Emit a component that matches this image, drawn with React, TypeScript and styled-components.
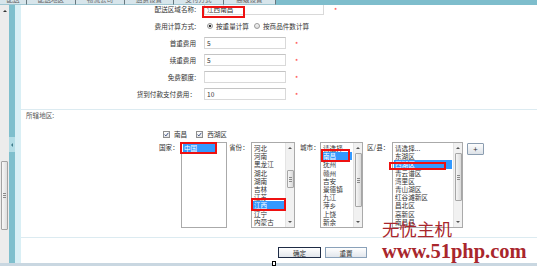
import React from "react";
import styled, { createGlobalStyle } from "styled-components";

const Global = createGlobalStyle`
  html, body { margin: 0; padding: 0; background: #fff; }
  body { font-family: "Noto Sans CJK SC", "Noto Sans", sans-serif; }
  * { box-sizing: border-box; }
`;

const Page = styled.div`
  position: relative;
  width: 537px;
  height: 266px;
  overflow: hidden;
  display: flex;
  flex-direction: column;
  background: #fff;
  font-size: 6.6px;
  color: #333;
`;

const TabBar = styled.div`
  flex: none;
  height: 5px;
  display: flex;
  background: #7ebdcc;
  overflow: hidden;
`;

const Tab = styled.div<{ $w: number }>`
  width: ${(p) => p.$w}px;
  height: 5px;
  background: #d7e5eb;
  border-right: 1px solid #66777e;
  border-bottom: 1px solid #9fc6d1;
  display: flex;
  justify-content: center;
  overflow: hidden;
`;

const TabText = styled.span`
  line-height: 8px;
  margin-top: -5px;
  color: #666;
  white-space: nowrap;
`;

const Body = styled.div`
  flex: 1;
  min-height: 0;
  display: flex;
`;

const SideScroll = styled.div`
  width: 9px;
  flex: none;
  background: #ececec;
  display: flex;
  flex-direction: column;
  padding-top: 5px;
`;

const UpTri = styled.div`
  align-self: center;
  width: 0;
  height: 0;
  border-left: 2px solid transparent;
  border-right: 2px solid transparent;
  border-bottom: 2px solid #333;
`;

const SideThumb = styled.div`
  margin-top: 149px;
  margin-left: 1px;
  width: 7px;
  height: 69px;
  border: 1px solid #a2a2a2;
  border-radius: 1px;
  background: linear-gradient(to right, #f7f7f7, #dedede);
  display: flex;
  align-items: center;
  justify-content: center;
`;

const Grip = styled.div<{ $w?: number }>`
  width: ${(p) => p.$w ?? 3}px;
  height: 5px;
  background: repeating-linear-gradient(#8a8a8a 0 1px, transparent 1px 2px);
`;

const TealStrip = styled.div`
  width: 6px;
  flex: none;
  background: #7fbfcd;
  display: flex;
  flex-direction: column;
`;

const Collapse = styled.div`
  margin-top: 132px;
  height: 15px;
  background: #b3dde6;
  display: flex;
  align-items: center;
  justify-content: center;
`;

const LeftTri = styled.div`
  width: 0;
  height: 0;
  border-top: 2px solid transparent;
  border-bottom: 2px solid transparent;
  border-right: 2px solid #3f7b8a;
`;

const LightStrip = styled.div`
  width: 6px;
  flex: none;
  background: #d9eff5;
`;

const Content = styled.div`
  position: relative;
  flex: 1;
  min-width: 0;
  display: flex;
  flex-direction: column;
  overflow: hidden;
  background: #fff;
`;

const Form = styled.div`
  margin-top: -4.5px;
  display: flex;
  flex-direction: column;
`;

const Row = styled.div`
  height: 17px;
  display: flex;
  align-items: center;
`;

const Label = styled.div`
  width: 175px;
  margin-right: 8px;
  text-align: right;
  white-space: nowrap;
  color: #333;
`;

const Field = styled.div<{ $w: number }>`
  position: relative;
  width: ${(p) => p.$w}px;
  height: 12px;
  border: 1px solid #d9d9d9;
  border-top-color: #c4c4c4;
  padding: 0 2px;
  line-height: 10px;
  color: #333;
  white-space: nowrap;
`;

const Req = styled.span<{ $gap: number }>`
  margin-left: ${(p) => p.$gap}px;
  color: #f33;
  font-size: 7px;
  line-height: 7px;
  padding-top: 3px;
`;

const Radio = styled.span<{ $on?: boolean; $ml: number }>`
  width: 6px;
  height: 6px;
  margin-left: ${(p) => p.$ml}px;
  margin-right: 3px;
  border-radius: 50%;
  border: 1px solid #9a9a9a;
  background: ${(p) =>
    p.$on
      ? "radial-gradient(circle, #2b2b2b 0 1.3px, #f2f2f2 1.6px)"
      : "linear-gradient(#f7f7f7, #dcdcdc)"};
`;

const Text = styled.span`
  white-space: nowrap;
`;

const Divider = styled.div<{ $mt: number }>`
  height: 1px;
  margin-top: ${(p) => p.$mt}px;
  background: #dcebf1;
  flex: none;
`;

const Legend = styled.div`
  margin-top: 1px;
  height: 8px;
  line-height: 8px;
  padding-left: 5px;
  color: #555;
`;

const CheckRow = styled.div`
  margin-top: 11px;
  height: 8px;
  padding-left: 142px;
  display: flex;
  align-items: center;
`;

const CheckBox = styled.span<{ $ml: number }>`
  width: 7px;
  height: 7px;
  margin-left: ${(p) => p.$ml}px;
  margin-right: 4px;
  border: 1px solid #8e8e8e;
  background: linear-gradient(#ffffff, #e3e3e3);
  display: flex;
  align-items: center;
  justify-content: center;
`;

const ListsRow = styled.div`
  margin-top: 4px;
  padding-left: 138px;
  display: flex;
  align-items: flex-start;
`;

const ListLabel = styled.div<{ $w: number; $pl: number }>`
  width: ${(p) => p.$w}px;
  padding-left: ${(p) => p.$pl}px;
  padding-top: 1px;
  line-height: 8px;
  white-space: nowrap;
  color: #333;
`;

const ListBox = styled.div<{ $w: number }>`
  position: relative;
  flex: none;
  width: ${(p) => p.$w}px;
  height: 86px;
  border: 1px solid #aaaaaa;
  background: #fff;
  display: flex;
`;

const Items = styled.div<{ $pr: number }>`
  flex: 1;
  min-width: 0;
  overflow: hidden;
  padding: 1px ${(p) => p.$pr}px 0 1px;
`;

const Item = styled.div<{ $sel?: boolean }>`
  height: 8.2px;
  line-height: 8.2px;
  padding-left: 1px;
  white-space: nowrap;
  overflow: hidden;
  background: ${(p) => (p.$sel ? "#3399ff" : "transparent")};
  color: ${(p) => (p.$sel ? "#fff" : "#333")};
`;

const Track = styled.div`
  width: 9px;
  flex: none;
  background: #f1f1f1;
  border-left: 1px solid #e4e4e4;
  display: flex;
  flex-direction: column;
  align-items: center;
`;

const ArrowCell = styled.div`
  height: 10px;
  flex: none;
  display: flex;
  align-items: center;
  justify-content: center;
`;

const Tri = styled.div<{ $down?: boolean }>`
  width: 0;
  height: 0;
  border-left: 2px solid transparent;
  border-right: 2px solid transparent;
  ${(p) => (p.$down ? "border-top: 2px solid #555;" : "border-bottom: 2px solid #555;")}
`;

const Thumb = styled.div<{ $mt: number; $h: number }>`
  margin-top: ${(p) => p.$mt}px;
  width: 7px;
  height: ${(p) => p.$h}px;
  border: 1px solid #a6a6a6;
  border-radius: 1px;
  background: linear-gradient(to right, #f6f6f6, #d9d9d9);
  display: flex;
  align-items: center;
  justify-content: center;
`;

const Spacer = styled.div`
  flex: 1;
`;

const Marker = styled.div`
  position: absolute;
  border: 2px solid #ee1111;
  pointer-events: none;
`;

const PlusButton = styled.div`
  margin-left: 4px;
  margin-top: 1px;
  width: 17px;
  height: 12px;
  border: 1px solid #8b9db0;
  border-radius: 1px;
  background: linear-gradient(#fdfdfd, #dde2e8);
  display: flex;
  align-items: center;
  justify-content: center;
  font-size: 8px;
  line-height: 8px;
  color: #333;
`;

const ButtonRow = styled.div`
  margin-top: 9px;
  padding-left: 257px;
  display: flex;
  gap: 4px;
`;

const Button = styled.div<{ $w: number; $focus?: boolean }>`
  width: ${(p) => p.$w}px;
  height: 11px;
  border: ${(p) => (p.$focus ? "1.5px solid #1e2b45" : "1px solid #8aa1b9")};
  background: linear-gradient(#ffffff, #e2e6ec);
  display: flex;
  align-items: center;
  justify-content: center;
  line-height: 8px;
  color: #333;
`;

const BottomBar = styled.div`
  flex: none;
  height: 3px;
  background: #c9d7e1;
`;

const WaterCn = styled.div`
  position: absolute;
  left: 382px;
  top: 218px;
  font-family: "Noto Sans CJK SC", sans-serif;
  font-size: 17.5px;
  line-height: 22px;
  color: #a9262c;
  white-space: nowrap;
`;

const WaterEn = styled.div`
  position: absolute;
  left: 382px;
  top: 240px;
  font-family: "Liberation Serif", serif;
  font-weight: 700;
  font-size: 20.5px;
  line-height: 22px;
  color: #a9262c;
  white-space: nowrap;
`;

const Cursor = styled.div`
  position: absolute;
  left: 272px;
  top: 261px;
  width: 4px;
  height: 5px;
  border: 1px solid #000;
  background: #fff;
`;

type Rect = { left: number; top: number; width: number; height: number };

function SelectList(props: {
  w: number;
  items: string[];
  sel: number;
  marker: Rect;
  scroll?: { mt: number; h: number };
  pr?: number;
}) {
  const { w, items, sel, marker, scroll, pr = 1 } = props;
  return (
    <ListBox $w={w}>
      <Items $pr={pr}>
        {items.map((t, i) => (
          <Item key={i} $sel={i === sel}>
            {t}
          </Item>
        ))}
      </Items>
      {scroll && (
        <Track>
          <ArrowCell>
            <Tri />
          </ArrowCell>
          <Thumb $mt={scroll.mt} $h={scroll.h}>
            <Grip />
          </Thumb>
          <Spacer />
          <ArrowCell>
            <Tri $down />
          </ArrowCell>
        </Track>
      )}
      <Marker style={marker} />
    </ListBox>
  );
}

const Check = () => (
  <svg width="5" height="5" viewBox="0 0 5 5">
    <path d="M0.6 2.6 L1.9 3.9 L4.4 0.8" fill="none" stroke="#27407a" strokeWidth="0.9" />
  </svg>
);

const tabs = [
  { w: 27, t: "配送" },
  { w: 49, t: "配送地区" },
  { w: 49, t: "物流公司" },
  { w: 49, t: "运费设置" },
  { w: 50, t: "支付方式" },
  { w: 52, t: "高级设置" },
];

const provinces = ["河北", "河南", "黑龙江", "湖北", "湖南", "吉林", "江苏", "江西", "辽宁", "内蒙古", "宁夏", "青海"];
const cities = ["请选择...", "南昌", "抚州", "赣州", "吉安", "景德镇", "九江", "萍乡", "上饶", "新余", "宜春", "鹰潭"];
const districts = ["请选择...", "东湖区", "西湖区", "青云谱区", "湾里区", "青山湖区", "红谷滩新区", "昌北区", "高新区", "南昌县", "新建县"];

export default function App() {
  return (
    <Page>
      <Global />
      <TabBar>
        {tabs.map((t, i) => (
          <Tab key={i} $w={t.w}>
            <TabText>{t.t}</TabText>
          </Tab>
        ))}
      </TabBar>
      <Body>
        <SideScroll>
          <UpTri />
          <SideThumb>
            <Grip />
          </SideThumb>
        </SideScroll>
        <TealStrip>
          <Collapse>
            <LeftTri />
          </Collapse>
        </TealStrip>
        <LightStrip />
        <Content>
          <Form>
            <Row>
              <Label>配送区域名称:</Label>
              <Field $w={120}>
                江西南昌
                <Marker style={{ left: -3, top: 2, width: 43, height: 12 }} />
              </Field>
              <Req $gap={10}>*</Req>
            </Row>
            <Row>
              <Label>费用计算方式:</Label>
              <Radio $on $ml={3} />
              <Text>按重量计算</Text>
              <Radio $ml={5} />
              <Text>按商品件数计算</Text>
            </Row>
            <Row>
              <Label>首重费用</Label>
              <Field $w={82}>5</Field>
              <Req $gap={9}>*</Req>
            </Row>
            <Row>
              <Label>续重费用</Label>
              <Field $w={82}>5</Field>
              <Req $gap={9}>*</Req>
            </Row>
            <Row>
              <Label>免费额度:</Label>
              <Field $w={82} />
              <Req $gap={9}>*</Req>
            </Row>
            <Row>
              <Label>货到付款支付费用：</Label>
              <Field $w={82}>10</Field>
              <Req $gap={9}>*</Req>
            </Row>
          </Form>
          <Divider $mt={6.5} />
          <Legend>所辖地区:</Legend>
          <CheckRow>
            <CheckBox $ml={0}>
              <Check />
            </CheckBox>
            <Text>南昌</Text>
            <CheckBox $ml={9}>
              <Check />
            </CheckBox>
            <Text>西湖区</Text>
          </CheckRow>
          <ListsRow>
            <ListLabel $w={22} $pl={0}>国家：</ListLabel>
            <SelectList
              w={46}
              items={["中国"]}
              sel={0}
              pr={11}
              marker={{ left: -2, top: -1, width: 37, height: 12 }}
            />
            <ListLabel $w={24} $pl={2}>省份：</ListLabel>
            <SelectList
              w={44}
              items={provinces}
              sel={7}
              scroll={{ mt: 17, h: 18 }}
              marker={{ left: -1, top: 55, width: 35, height: 13 }}
            />
            <ListLabel $w={25} $pl={5}>城市：</ListLabel>
            <SelectList
              w={43}
              items={cities}
              sel={1}
              scroll={{ mt: 0, h: 54 }}
              marker={{ left: 0, top: 6, width: 29, height: 13 }}
            />
            <ListLabel $w={29} $pl={4}>区/县：</ListLabel>
            <SelectList
              w={71}
              items={districts}
              sel={2}
              scroll={{ mt: 0, h: 48 }}
              marker={{ left: -4, top: 19, width: 57, height: 8 }}
            />
            <PlusButton>+</PlusButton>
          </ListsRow>
          <Divider $mt={9} />
          <ButtonRow>
            <Button $w={43} $focus>
              确定
            </Button>
            <Button $w={42}>重置</Button>
          </ButtonRow>
        </Content>
      </Body>
      <BottomBar />
      <WaterCn>无忧主机</WaterCn>
      <WaterEn>www.51php.com</WaterEn>
      <Cursor />
    </Page>
  );
}
